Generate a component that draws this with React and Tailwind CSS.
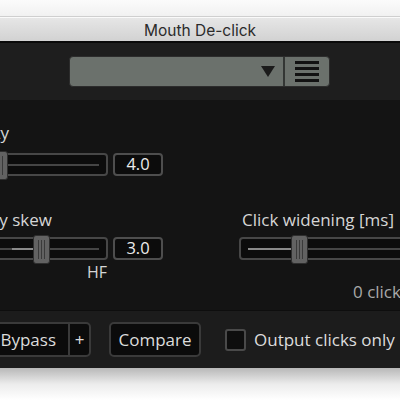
import React from "react";

const ui = { fontFamily: '"Open Sans", "Noto Sans", sans-serif' };

function Thumb() {
  return (
    <div className="absolute top-[-4px] h-[29px] w-[17px] rounded-[3px] border border-[#2e2e2e] bg-[#626262] flex justify-center gap-[2px] py-[4px]">
      <div className="w-[1px] bg-[#3a3a3a]" />
      <div className="w-[1px] bg-[#3a3a3a]" />
      <div className="w-[1px] bg-[#3a3a3a]" />
    </div>
  );
}

function Track({ width, thumb, fill, className = "" }) {
  return (
    <div
      className={`relative h-[23px] shrink-0 rounded-[4px] border-2 border-[#474747] bg-[#0c0c0c] ${className}`}
      style={{ width }}
    >
      <div className="absolute left-[7px] right-[7px] top-[9px] h-[2px] bg-[#454545]" />
      {fill && (
        <div
          className="absolute top-[9px] h-[2px] bg-[#8a8a8a]"
          style={{ left: fill[0], width: fill[1] }}
        />
      )}
      <div className="absolute" style={{ left: thumb }}>
        <Thumb />
      </div>
    </div>
  );
}

function NumBox({ value }) {
  return (
    <div className="h-[23px] w-[50px] shrink-0 rounded-[4px] border-2 border-[#4e4e4e] bg-[#0c0c0c] flex items-center justify-center text-[16.5px] text-[#ececec]">
      {value}
    </div>
  );
}

export default function App() {
  return (
    <div className="w-[400px] h-[400px] overflow-hidden bg-white flex flex-col">
      <div className="h-[17px] shrink-0 bg-gradient-to-b from-[#fbfbfb] to-[#f1f1f1] border-b border-[#cfcfcf]" />
      <div
        className="h-[24px] shrink-0 pt-[2px] border-t border-[#fafafa] bg-gradient-to-b from-[#e6e6e6] to-[#d2d2d2] flex items-center justify-center text-[15.5px] text-[#2b2b2b]"
        style={{ fontFamily: 'Inter, "Liberation Sans", sans-serif' }}
      >
        Mouth De-click
      </div>
      <div className="h-[2px] shrink-0 bg-[#0a0a0a]" />

      <div className="flex flex-col shrink-0" style={ui}>
        {/* header with preset dropdown */}
        <div className="h-[57px] bg-[#1e1e1e] pt-[13px] pl-[69px]">
          <div className="flex h-[31px] w-[261px] rounded-[4px] border border-[#2c2c2c] bg-[#6b716c] overflow-hidden">
            <div className="flex-1 flex items-center justify-end pr-[8px] border-r-2 border-[#333634]">
              <div className="w-0 h-0 border-l-[7px] border-r-[7px] border-t-[11px] border-l-transparent border-r-transparent border-t-[#1b1b1b]" />
            </div>
            <div className="w-[44px] flex flex-col items-center justify-center gap-[3px]">
              <div className="h-[3px] w-[24px] bg-[#121212]" />
              <div className="h-[3px] w-[24px] bg-[#121212]" />
              <div className="h-[3px] w-[24px] bg-[#121212]" />
              <div className="h-[3px] w-[24px] bg-[#121212]" />
            </div>
          </div>
        </div>

        {/* parameters */}
        <div className="h-[210px] bg-[#141414] flex text-[17px] text-[#d6d6d6]">
          <div className="w-[163px] shrink-0 flex flex-col">
            <div className="mt-[21px] h-[24px] w-[9px] flex justify-end whitespace-nowrap leading-[24px]">
              Sensitivity
            </div>
            <div className="mt-[8px] flex gap-[5px]">
              <Track width={118} className="-ml-[10px]" thumb={-1} />
              <NumBox value="4.0" />
            </div>
            <div className="mt-[32px] h-[24px] w-[52px] flex justify-end whitespace-nowrap leading-[24px]">
              Frequency skew
            </div>
            <div className="mt-[5px] flex gap-[5px]">
              <Track width={118} className="-ml-[10px]" thumb={41} fill={[20, 22]} />
              <NumBox value="3.0" />
            </div>
            <div className="h-[24px] leading-[24px] pl-[87px] text-[16px]">HF</div>
          </div>
          <div className="ml-[76px] flex flex-col">
            <div className="mt-[108px] h-[24px] leading-[24px] pl-[3px] whitespace-nowrap">
              Click widening [ms]
            </div>
            <div className="mt-[5px]">
              <Track width={200} thumb={50} fill={[7, 45]} />
            </div>
            <div className="mt-[20px] h-[24px] leading-[24px] pl-[114px] whitespace-nowrap text-[#a8a8a8]">
              0 clicks removed
            </div>
          </div>
        </div>

        {/* bottom bar */}
        <div className="h-[58px] bg-[#1c1c1c] border-t border-[#0e0e0e] flex items-center text-[17px] text-[#dcdcdc]">
          <div className="-ml-[20px] flex shrink-0 h-[35px] rounded-[5px] border-2 border-[#3a3a3a] bg-[#0b0b0b]">
            <div className="w-[88px] flex items-center justify-end pr-[12px] border-r-2 border-[#3a3a3a]">
              Bypass
            </div>
            <div className="w-[19px] flex items-center justify-center">+</div>
          </div>
          <div className="ml-[18px] h-[35px] w-[92px] shrink-0 rounded-[5px] border-2 border-[#3a3a3a] bg-[#0b0b0b] flex items-center justify-center">
            Compare
          </div>
          <div className="ml-[24px] h-[22px] w-[21px] shrink-0 rounded-[3px] border-2 border-[#4a4a4a] bg-[#0e0e0e]" />
          <div className="ml-[8px] whitespace-nowrap">Output clicks only</div>
        </div>
      </div>
      <div className="flex-1 bg-gradient-to-b from-[#b8b8b8] via-[#ececec] to-white" />
    </div>
  );
}
